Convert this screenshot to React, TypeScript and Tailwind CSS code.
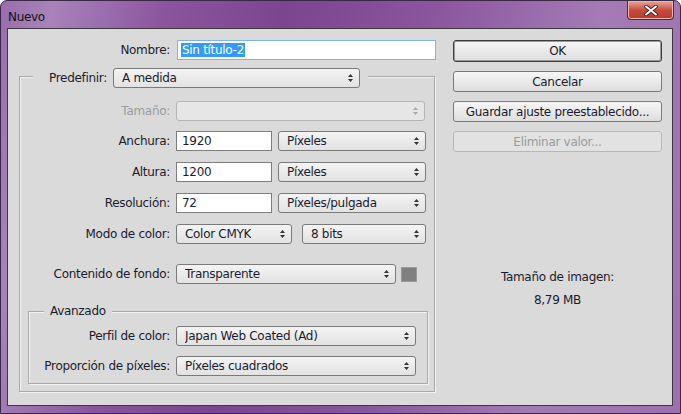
import React from "react";

const label = "text-right leading-[20px] text-[#1b1b2f]";

function Arrows({ disabled = false }: { disabled?: boolean }) {
  return (
    <svg width="5" height="10" viewBox="0 0 5 10" className="shrink-0">
      <path d="M0 4 L2.5 1 L5 4Z M0 6 L2.5 9 L5 6Z" fill={disabled ? "#a8a8a8" : "#333"} />
    </svg>
  );
}

function Select({ value = "", w, disabled = false }: { value?: string; w: string; disabled?: boolean }) {
  return (
    <div
      className={`${w} flex h-[20px] shrink-0 items-center justify-between rounded-[3px] border pl-[8px] pr-[6px] ${
        disabled
          ? "border-[#b5b5b5] bg-[#e6e6e6]"
          : "border-[#7a7a7a] bg-gradient-to-b from-[#f4f4f4] to-[#e2e2e2]"
      }`}
    >
      <span className="truncate leading-[18px] text-[#1b1b2f]">{value}</span>
      <Arrows disabled={disabled} />
    </div>
  );
}

function Input({ value, w }: { value: string; w: string }) {
  return (
    <div className={`${w} h-[20px] shrink-0 border border-[#7d7d7d] bg-white pl-[5px] leading-[18px] text-[#1b1b2f]`}>
      {value}
    </div>
  );
}

function Button({ text, def = false, disabled = false }: { text: string; def?: boolean; disabled?: boolean }) {
  return (
    <div
      className={`flex items-center justify-center rounded-[3px] border ${
        def
          ? "h-[22px] border-[#3d3d3d] shadow-[inset_0_0_0_1px_#9a9a9a]"
          : "h-[21px] border-[#7a7a7a]"
      } ${
        disabled
          ? "border-[#b8b8b8] bg-[#e2e2e2] text-[#9a9a9a]"
          : "bg-gradient-to-b from-[#f6f6f6] to-[#dedede] text-[#1b1b2f]"
      }`}
    >
      {text}
    </div>
  );
}

export default function App() {
  return (
    <div className="h-[414px] w-[681px] overflow-hidden rounded-t-[7px] border border-[#3b2846] bg-[linear-gradient(100deg,#9a6cad_0%,#a883b9_7%,#8b559e_22%,#7b458f_38%,#8a569d_58%,#a47bb5_80%,#9d70af_100%)] font-['DejaVu_Sans',sans-serif] text-[12px] tracking-[-0.3px]">
      {/* title bar */}
      <div className="flex h-[27px] items-start justify-between">
        <div className="pl-[7px] pt-[7px] text-[#111]">Nuevo</div>
        <div className="mr-[6px] flex h-[19px] w-[47px] items-center justify-center rounded-b-[4px] border border-t-0 border-[#5a2a2a] bg-gradient-to-b from-[#e0a99f] via-[#c94b3b] to-[#b73a2a] shadow-[inset_0_0_0_1px_#e8b5a8]">
          <svg width="14" height="11" viewBox="0 0 14 11">
            <path d="M2 1.5 L12 9.5 M12 1.5 L2 9.5" stroke="#3a2020" strokeWidth="3.6" strokeLinecap="round" />
            <path d="M2 1.5 L12 9.5 M12 1.5 L2 9.5" stroke="#fff" strokeWidth="2" strokeLinecap="round" />
          </svg>
        </div>
      </div>

      {/* client */}
      <div className="ml-[6px] mr-[7px] flex h-[378px] border border-[#3a3a3a] bg-[#dadada]">
        {/* left column */}
        <div className="w-[445px] shrink-0">
          <div className="mt-[11px] flex items-center">
            <div className={`w-[162px] ${label}`}>Nombre:</div>
            <div className="ml-[7px] h-[20px] w-[259px] border border-[#7eb4ea] bg-white pl-[3px] pt-[2px] leading-[15px]">
              <span className="bg-[#3399ff] px-[1px] text-white">Sin título-2</span>
            </div>
          </div>

          {/* Predefinir group */}
          <div className="ml-[11px] mt-[16px] w-[416px] border border-[#a9a9a9] pb-[7px] shadow-[inset_1px_1px_0_#f2f2f2,1px_1px_0_#f2f2f2]">
            <div className="-mt-[9px] ml-[13px] flex w-[335px] items-center bg-[#dadada] pr-[8px]">
              <div className={`flex-1 ${label}`}>Predefinir:</div>
              <div className="ml-[6px]">
                <Select value="A medida" w="w-[247px]" />
              </div>
            </div>

            <div className="mt-[13px] flex items-center">
              <div className={`w-[150px] ${label} text-[#9a9a9a]`}>Tamaño:</div>
              <div className="ml-[6px]">
                <Select w="w-[249px]" disabled />
              </div>
            </div>

            <div className="mt-[10px] flex items-center">
              <div className={`w-[150px] ${label}`}>Anchura:</div>
              <div className="ml-[6px] flex gap-[6px]">
                <Input value="1920" w="w-[96px]" />
                <Select value="Píxeles" w="w-[148px]" />
              </div>
            </div>

            <div className="mt-[11px] flex items-center">
              <div className={`w-[150px] ${label}`}>Altura:</div>
              <div className="ml-[6px] flex gap-[6px]">
                <Input value="1200" w="w-[96px]" />
                <Select value="Píxeles" w="w-[148px]" />
              </div>
            </div>

            <div className="mt-[11px] flex items-center">
              <div className={`w-[150px] ${label}`}>Resolución:</div>
              <div className="ml-[6px] flex gap-[6px]">
                <Input value="72" w="w-[96px]" />
                <Select value="Píxeles/pulgada" w="w-[148px]" />
              </div>
            </div>

            <div className="mt-[11px] flex items-center">
              <div className={`w-[150px] ${label}`}>Modo de color:</div>
              <div className="ml-[6px] flex gap-[10px]">
                <Select value="Color CMYK" w="w-[116px]" />
                <Select value="8 bits" w="w-[124px]" />
              </div>
            </div>

            <div className="mt-[20px] flex items-center">
              <div className={`w-[150px] ${label}`}>Contenido de fondo:</div>
              <div className="ml-[6px] flex items-center gap-[5px]">
                <Select value="Transparente" w="w-[220px]" />
                <div className="h-[15px] w-[16px] border border-[#9a9a9a] bg-[#808080]" />
              </div>
            </div>

            {/* Avanzado group */}
            <div className="ml-[8px] mt-[27px] w-[400px] border border-[#a9a9a9] pb-[7px] shadow-[inset_1px_1px_0_#f2f2f2,1px_1px_0_#f2f2f2]">
              <div className="-mt-[8px] ml-[15px] w-fit bg-[#dadada] px-[6px] leading-[15px] text-[#1b1b2f]">
                Avanzado
              </div>
              <div className="mt-[7px] flex items-center">
                <div className={`w-[141px] ${label}`}>Perfil de color:</div>
                <div className="ml-[6px]">
                  <Select value="Japan Web Coated (Ad)" w="w-[240px]" />
                </div>
              </div>
              <div className="mt-[10px] flex items-center">
                <div className={`w-[141px] ${label}`}>Proporción de píxeles:</div>
                <div className="ml-[6px]">
                  <Select value="Píxeles cuadrados" w="w-[240px]" />
                </div>
              </div>
            </div>
          </div>
        </div>

        {/* right column */}
        <div className="w-[209px] shrink-0">
          <div className="mt-[11px]">
            <Button text="OK" def />
          </div>
          <div className="mt-[9px]">
            <Button text="Cancelar" />
          </div>
          <div className="mt-[9px]">
            <Button text="Guardar ajuste preestablecido..." />
          </div>
          <div className="mt-[9px]">
            <Button text="Eliminar valor..." disabled />
          </div>
          <div className="mt-[118px] text-center leading-[15px] text-[#1b1b2f]">Tamaño de imagen:</div>
          <div className="mt-[8px] text-center leading-[15px] text-[#1b1b2f]">8,79 MB</div>
        </div>
      </div>
    </div>
  );
}
